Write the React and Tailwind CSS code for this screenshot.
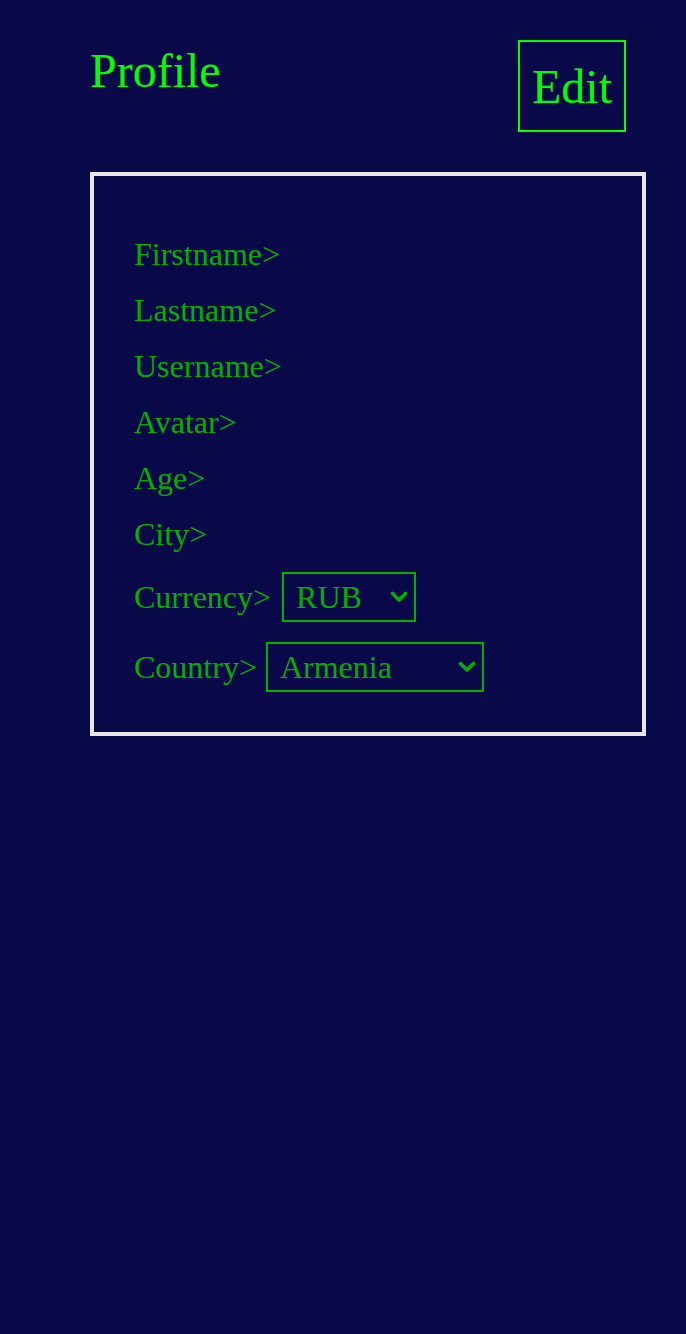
import React, { useState } from "react";

const fields = ["Firstname", "Lastname", "Username", "Avatar", "Age", "City"];

const Chevron = () => (
  <svg
    width="18"
    height="12"
    viewBox="0 0 18 12"
    className="pointer-events-none absolute top-1/2 -translate-y-1/2 right-[8px]"
  >
    <polyline
      points="2.5,2.5 9,9 15.5,2.5"
      fill="none"
      stroke="#00b000"
      strokeWidth="3.6"
      strokeLinecap="round"
      strokeLinejoin="round"
    />
  </svg>
);

const Select = ({ value, onChange, options, width, className }) => (
  <div className={`relative ${className}`}>
    <select
      value={value}
      onChange={(e) => onChange(e.target.value)}
      className={`${width} h-[50px] appearance-none bg-transparent border-2 border-[#00b000] pl-3 pr-8 text-[32px] leading-9 text-[#00b000] outline-none`}
    >
      {options.map((o) => (
        <option key={o} value={o} className="bg-[#090848]">
          {o}
        </option>
      ))}
    </select>
    <Chevron />
  </div>
);

const App = () => {
  const [currency, setCurrency] = useState("RUB");
  const [country, setCountry] = useState("Armenia");

  return (
    <div className="min-h-screen bg-[#090848] font-['Liberation_Serif',serif]">
      {/* Header */}
      <div className="flex items-start justify-between pt-10 pl-[90px] pr-[60px]">
        <h1 className="mt-[3px] text-[48px] leading-[55px] text-[#00ff00]">Profile</h1>
        <button className="flex h-[92px] items-center border-2 border-[#00ff00] px-3 text-[48px] leading-[55px] text-[#00ff00]">
          Edit
        </button>
      </div>

      {/* Card */}
      <div className="ml-[90px] mt-10 w-[556px] border-4 border-[#e8e8ea] px-10 pt-[60px] pb-10">
        <div className="flex flex-col gap-5 text-[32px] leading-9 text-[#00b000]">
          {fields.map((f) => (
            <div key={f}>{f}&gt;</div>
          ))}
          <div className="flex items-center">
            <span>Currency&gt;</span>
            <Select
              value={currency}
              onChange={setCurrency}
              options={["RUB", "USD", "EUR"]}
              width="w-[134px]"
              className="ml-[11px]"
            />
          </div>
          <div className="flex items-center">
            <span>Country&gt;</span>
            <Select
              value={country}
              onChange={setCountry}
              options={["Armenia", "Russia", "Belarus", "Kazakhstan", "Ukraine"]}
              width="w-[218px]"
              className="ml-[9px]"
            />
          </div>
        </div>
      </div>
    </div>
  );
};

export default App;
